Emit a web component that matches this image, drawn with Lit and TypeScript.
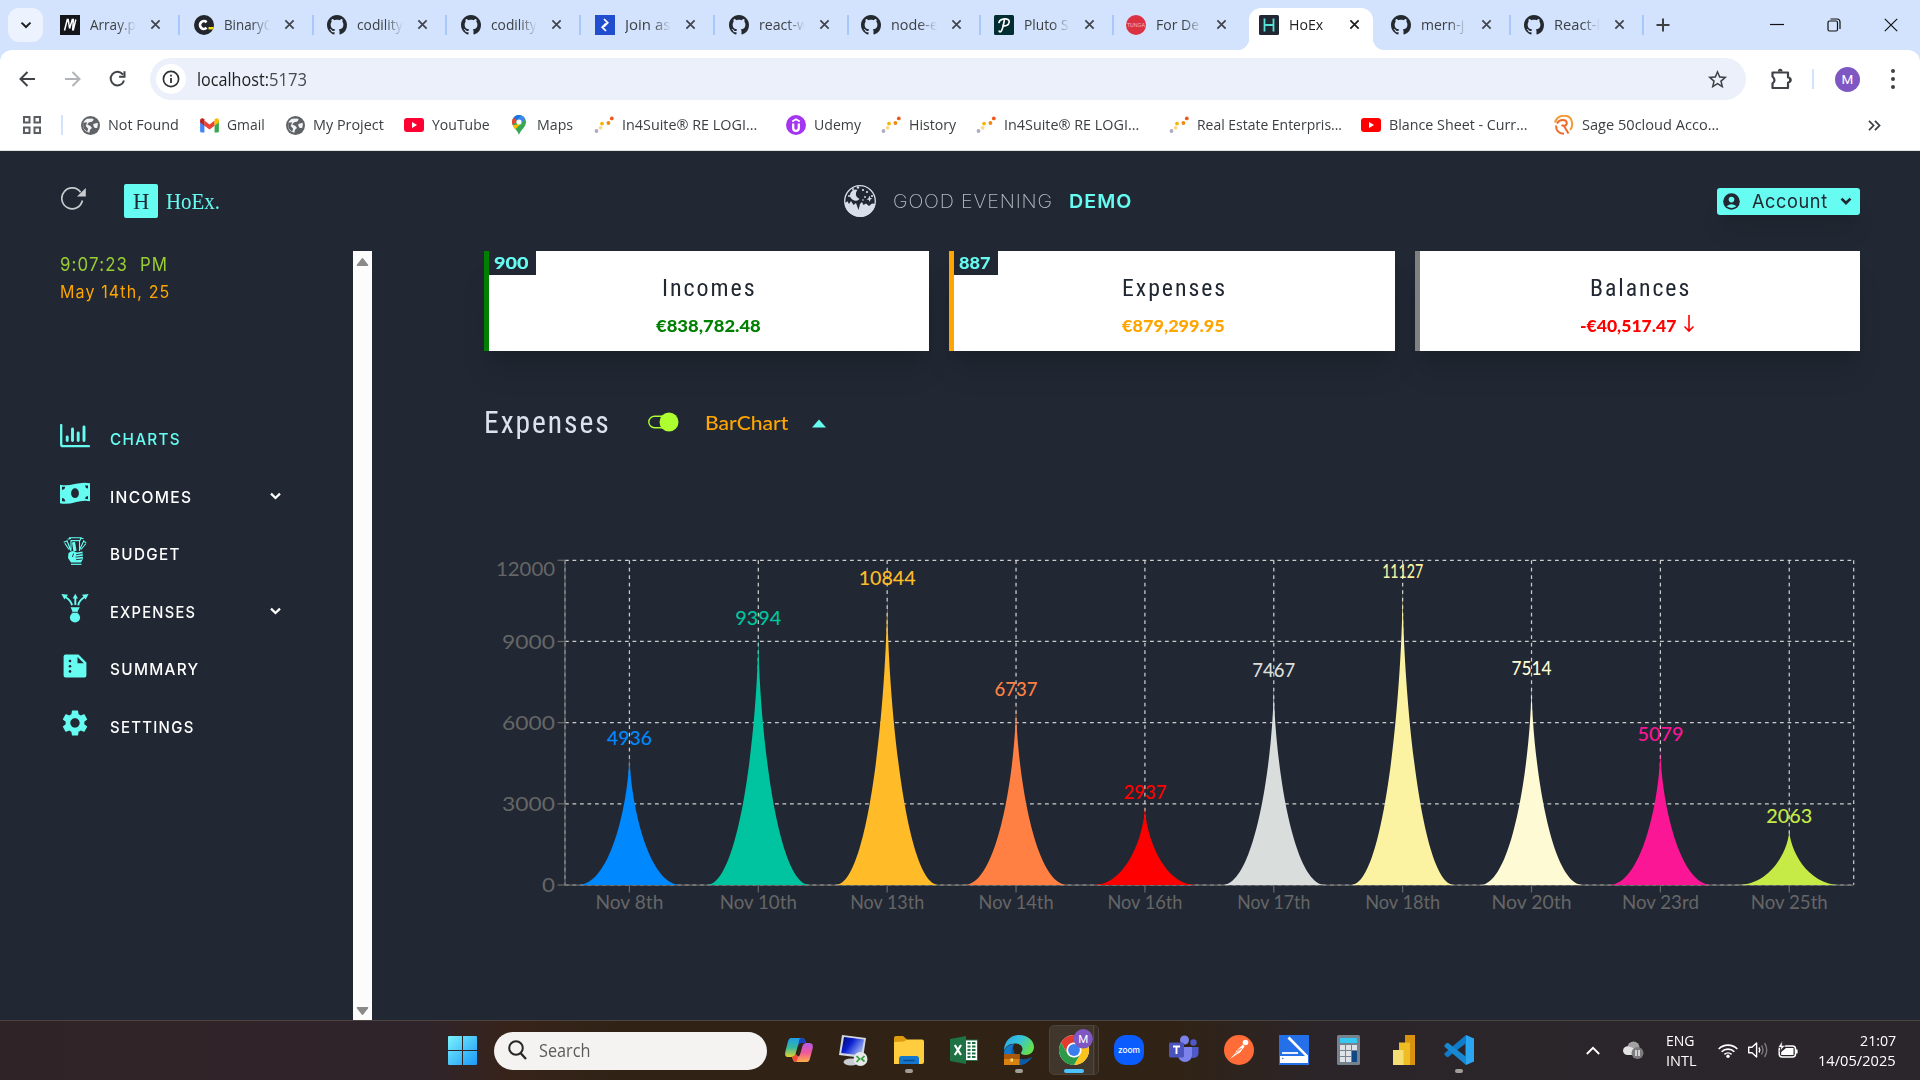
import { LitElement, html, svg, css, type TemplateResult } from "lit";
import { customElement, property } from "lit/decorators.js";
import { classMap } from "lit/directives/class-map.js";

type Art = TemplateResult | ReturnType<typeof svg>;

const icon = (box: string, w: number, h: number, art: Art) =>
  html`<svg viewBox=${box} width=${w} height=${h} style="display:block;flex:none">${art}</svg>`;

/** Text squeezed or stretched horizontally to a known measure. */
@customElement("fit-label")
class FitLabel extends LitElement {
  static styles = css`
    :host { display: inline-block; flex: none; white-space: pre; }
    .ink { display: inline-block; transform-origin: 0 50%; }
  `;
  @property() text = "";
  @property({ type: Number }) measure = 0;

  render() {
    return html`<span class="ink">${this.text}</span>`;
  }

  updated() {
    const ink = this.renderRoot.querySelector(".ink") as HTMLElement;
    const trailing = parseFloat(getComputedStyle(ink).letterSpacing) || 0;
    this.style.width = `${this.measure}px`;
    ink.style.transform = `scaleX(${this.measure / (ink.offsetWidth - trailing)})`;
  }
}

const label = (text: string, measure: number) =>
  html`<fit-label .text=${text} .measure=${measure}></fit-label>`;

/* ---------- artwork ---------- */

const github = icon("0 0 16 16", 20, 20, svg`<path fill="#24292f" d="M8 0C3.58 0 0 3.58 0 8c0 3.54 2.29 6.53 5.47 7.59.4.07.55-.17.55-.38 0-.19-.01-.82-.01-1.49-2.01.37-2.53-.49-2.69-.94-.09-.23-.48-.94-.82-1.13-.28-.15-.68-.52-.01-.53.63-.01 1.08.58 1.23.82.72 1.21 1.87.87 2.33.66.07-.52.28-.87.51-1.07-1.78-.2-3.64-.89-3.64-3.95 0-.87.31-1.59.82-2.15-.08-.2-.36-1.02.08-2.12 0 0 .67-.21 2.2.82.64-.18 1.32-.27 2-.27s1.36.09 2 .27c1.53-1.04 2.2-.82 2.2-.82.44 1.1.16 1.92.08 2.12.51.56.82 1.27.82 2.15 0 3.07-1.87 3.75-3.65 3.95.29.25.54.73.54 1.48 0 1.07-.01 1.93-.01 2.2 0 .21.15.46.55.38A8.01 8.01 0 0 0 16 8c0-4.42-3.58-8-8-8z"/>`);

const metaFav = icon("0 0 20 20", 20, 20, svg`<rect width="20" height="20" fill="#14151a"/><path d="M4.500 15.500 7.300 4.500H8.200L9.600 13.500 12.300 4.500H13.300L12.700 15.500M15.800 4.500 13.200 15.500" fill="none" stroke="#fff" stroke-width="1.500"/>`);
const codilityFav = icon("0 0 20 20", 20, 20, svg`<circle cx="10" cy="10" r="10" fill="#22252c"/><path d="M12.600 7.200A3.900 3.900 0 1 0 12.600 12.800" fill="none" stroke="#fff" stroke-width="2.600"/><rect x="14.500" y="12" width="5" height="2.400" fill="#f7e017"/>`);
const toptalFav = icon("0 0 20 20", 20, 20, svg`<rect width="20" height="20" fill="#204ecf"/><path d="M9 4 12.800 7.800 9 11.600M11 16 7.200 12.200 11 8.400" fill="none" stroke="#fff" stroke-width="1.700"/>`);
const plutoFav = icon("0 0 20 20", 20, 20, svg`<rect width="20" height="20" rx="1.500" fill="#022e32"/><path d="M5 7.500C6 3.500 15.600 2.200 15.200 7 14.900 10.600 10.400 11.800 9 10.200M10.300 5.400C9.600 9.500 8.600 15 6.800 16.600 6 17.200 5.200 16.800 5.200 16" fill="none" stroke="#fff" stroke-width="1.700" stroke-linecap="round"/>`);
const tungaFav = icon("0 0 20 20", 20, 20, svg`<circle cx="10" cy="10" r="10" fill="#dc3142"/><text x="10" y="12" font-size="5.200" text-anchor="middle" fill="#f5b9be" font-family="Liberation Sans">TUNGA</text>`);
const hoexFav = icon("0 0 20 20", 20, 20, svg`<rect width="20" height="20" rx="1.500" fill="#212833"/><path d="M5.500 3.500V16.500M14.500 3.500V16.500M5.500 10H14.500" stroke="#55e2d8" stroke-width="1.800"/>`);
const cross = icon("0 0 12 12", 11, 11, svg`<path d="M1.500 1.500 10.500 10.500M10.500 1.500 1.500 10.500" stroke="currentColor" stroke-width="1.900"/>`);

const globe = icon("2 2 20 20", 19, 19, svg`<circle cx="12" cy="12" r="10" fill="#5f6368"/><path fill="#fff" d="M4 12c0-3 1.600-5.800 4.200-7.200L14 4.600 15.500 6 13.500 8 10.500 8.500 8.500 11 12 12.500 13.500 14.500 11.500 16.500 10.800 19.500C7 19 4 16 4 12zM15 10.500 19.500 9Q20.300 12 19 14.500L16.500 14.500 15 12.500z" opacity=".92"/><path fill="#5f6368" d="M4.200 9 8.500 8.600 7 12.500 9.500 15.500 8.500 18.500 4.500 15z"/>`);
const gmail = icon("0 0 20 16", 19, 15, svg`<path d="M0 2.500V14a1.500 1.500 0 0 0 1.500 1.500H4.600V6.500z" fill="#4285f4"/><path d="M20 2.500V14a1.500 1.500 0 0 1-1.500 1.500H15.400V6.500z" fill="#34a853"/><path d="M4.600 2.600 10 6.800 15.400 2.600V8.200L10 12.300 4.600 8.200z" fill="#ea4335"/><path d="M0 2.600C0 .4 2.300-.5 4 .9L4.600 1.400V8.200L0 4.700z" fill="#c5221f"/><path d="M20 2.600C20 .4 17.700-.5 16 .9L15.400 1.400V8.200L20 4.700z" fill="#fbbc04"/>`);
const youtube = (c: string) => icon("0 0 20 14", 20, 14, svg`<rect width="20" height="14" rx="3" fill=${c}/><path d="M8 4 13 7 8 10z" fill="#fff"/>`);
const mapsPin = icon("0 0 14 20", 14, 20, svg`<path d="M7 20C6 15.600 0 12 0 7A7 7 0 0 1 14 7C14 12 8 15.600 7 20z" fill="#34a853"/><path d="M0 7A7 7 0 0 1 1.700 2.400L5 5.300.8 10.200C.3 9.200 0 8.200 0 7z" fill="#ea4335"/><path d="M1.700 2.400A7 7 0 0 1 9.300.4L5 5.300z" fill="#1a73e8"/><path d="M9.300.4A7 7 0 0 1 13.200 3.700L8.800 8.800 5 5.300z" fill="#4285f4"/><path d="M.8 10.200 8.800 8.800 3.200 14.400C2.200 13 1.300 11.800.8 10.200z" fill="#fbbc04"/><circle cx="7" cy="7" r="2.600" fill="#fff"/>`);
const dots = icon("0 0 20 20", 20, 20, svg`<circle cx="2.500" cy="16" r="1.900" fill="#a9adbd"/><circle cx="6.600" cy="12.800" r="1.900" fill="#fbd98a"/><circle cx="8" cy="8.600" r="1.900" fill="#f5b400"/><circle cx="14.400" cy="8" r="1.900" fill="#f08a10"/><circle cx="17.800" cy="3.400" r="1.900" fill="#ee5a1c"/>`);
const udemy = icon("0 0 20 20", 20, 20, svg`<circle cx="10" cy="10" r="10" fill="#a435f0"/><path d="M6.200 6.600 10 4.300 13.800 6.600" fill="none" stroke="#fff" stroke-width="1.700"/><path d="M7.200 8.500V13a2.800 2.800 0 0 0 5.600 0V8.500" fill="none" stroke="#fff" stroke-width="2.300"/>`);
const sage = icon("0 0 20 20", 20, 20, svg`<path d="M1 7.500C3.500-1 15-1.500 17.500 5.500 19 10 18 13 16 15" fill="none" stroke="#f29a38" stroke-width="2"/><path d="M3 8.500C5.500 4 12.500 4 12.800 8 13 11 9 11.200 7.500 10.200M10 11 14.500 18.500M2 10.500C2 15.500 5 18.500 10 18.800" fill="none" stroke="#ee6c2b" stroke-width="2"/>`);

const MINT = "#66fcf1";
const chartsIcon = icon("0 0 30 24", 30, 24, svg`<path d="M1.200 1V20.500Q1.200 22.200 3 22.200H29" fill="none" stroke=${MINT} stroke-width="2.300" stroke-linecap="round"/><path d="M7.200 13V16.500M12.500 5V16.500M18.200 9V16.500M24 3V16.500" stroke=${MINT} stroke-width="2.900" stroke-linecap="round"/>`);
const moneyIcon = icon("0 0 30 24", 30, 24, svg`<path d="M0 3.700C10 6.500 19 -.5 30 2.300V20.300C20 17.500 11 25 0 22.200z" fill=${MINT}/><ellipse cx="15" cy="12.200" rx="3.900" ry="4.900" fill="#212833"/><g fill="#212833"><path d="M2 5.800H5.200Q5 8.500 2 9z"/><path d="M28 4.400H25Q25.200 7 28 7.400z"/><path d="M2 17Q5 17.300 5.300 20.500L2 20.300z"/><path d="M28 15Q25.200 15.300 25 17.800L28 18.200z"/></g>`);
const budgetIcon = icon("0 0 24 28", 24, 28, svg`<g fill="none" stroke=${MINT} stroke-width="1.100"><path d="M6 .8H18L17 3.500M7.500 3.600H16.500V14M8 4V13M3.800 3.200 7.500 13M1.800 6.200 6 12.500M.7 5.300 3.800 4M4.600 2.200 8 1.500M16.500 13 21 3.200M18 12.500 23 6.500M20.500 1.800 17.500 1M23.300 5.600 20.500 4.500M5.200 6.500 8 14"/></g><path d="M9 5.500 12 4.800 13.500 13.500 10.500 15z" fill=${MINT}/><path d="M5.500 16 9 14 14 15.500 19.500 14.500 20 22 18 25.500H8L5 21z" fill=${MINT}/><path d="M13 17.800 19.500 16.600M12.500 20.200 20 19.200M13 22.700 19.500 22M10.500 16.500 9.500 20" stroke="#212833" stroke-width=".9"/><path d="M8 27.300H18.500" stroke=${MINT} stroke-width="1.200"/>`);
const expensesIcon = icon("0 0 28 30", 28, 30, svg`<g fill=${MINT}><path d="M.4 1 7 1.800 3.400 6.500z"/><path d="M27.600 1 21 1.800 24.600 6.500z"/><path d="M14.300.8 16.900 5.500H11.700z"/><path d="M9.600 14.300 18.800 14.300 16.600 18.200 17.800 20H10.200L11.400 18.200z"/><circle cx="14" cy="24.500" r="5.100"/></g><g fill="none" stroke=${MINT} stroke-width="1.900"><path d="M4.500 4Q10 7.500 11 12.300M23.500 4Q18 7.500 17.200 12.300M14.300 5V12"/></g><path d="M9.500 19.300H18.500" stroke="#212833" stroke-width=".9"/>`);
const summaryIcon = icon("0 0 24 24", 24, 24, svg`<path d="M2.600.6H15.500L23.400 8.500V21.400A2 2 0 0 1 21.400 23.400H2.600A2 2 0 0 1 .6 21.400V2.600A2 2 0 0 1 2.600.6z" fill=${MINT}/><path d="M14.500 3V9.300H20.800z" fill="#212833"/><circle cx="7" cy="7" r="1.300" fill="#212833"/><circle cx="7" cy="12.200" r="1.300" fill="#212833"/><circle cx="7" cy="17.400" r="1.300" fill="#212833"/>`);
const gearIcon = icon("2 2 20 20", 26, 26, svg`<path fill=${MINT} d="M19.140 12.940c.04-.3.06-.61.06-.94 0-.32-.02-.64-.07-.94l2.030-1.580c.18-.14.23-.41.12-.61l-1.920-3.320c-.12-.22-.37-.29-.59-.22l-2.390.96c-.5-.38-1.030-.7-1.620-.94l-.36-2.540c-.04-.24-.24-.41-.48-.41h-3.840c-.24 0-.43.17-.47.41l-.36 2.540c-.59.24-1.130.57-1.620.94l-2.390-.96c-.22-.08-.47 0-.59.22L2.740 8.870c-.12.21-.08.47.12.61l2.030 1.580c-.05.3-.09.63-.09.94s.02.64.07.94l-2.030 1.580c-.18.14-.23.41-.12.61l1.920 3.320c.12.22.37.29.59.22l2.390-.96c.5.38 1.030.7 1.620.94l.36 2.540c.05.24.24.41.48.41h3.840c.24 0 .44-.17.47-.41l.36-2.540c.59-.24 1.130-.56 1.620-.94l2.390.96c.22.08.47 0 .59-.22l1.920-3.320c.12-.22.07-.47-.12-.61l-2.010-1.580zM12 15.600c-1.980 0-3.600-1.620-3.600-3.600s1.620-3.600 3.600-3.600 3.600 1.620 3.600 3.600-1.620 3.600-3.600 3.600z"/>`);
const chevron = (w: number, h: number, sw = 2.4) => icon("0 0 12 8", w, h, svg`<path d="M1.500 1.600 6 6 10.500 1.600" fill="none" stroke="currentColor" stroke-width=${sw}/>`);

/* ---------- browser chrome ---------- */

interface Tab { fav: Art; title: string; text: number; slot: number; active?: boolean; bar?: boolean }
const tabs: Tab[] = [
  { fav: metaFav, title: "Array.p", text: 46, slot: 134, bar: true },
  { fav: codilityFav, title: "BinaryC", text: 48, slot: 133, bar: true },
  { fav: github, title: "codility", text: 46, slot: 134, bar: true },
  { fav: github, title: "codility", text: 46, slot: 134, bar: true },
  { fav: toptalFav, title: "Join as", text: 45, slot: 134, bar: true },
  { fav: github, title: "react-w", text: 49, slot: 132, bar: true },
  { fav: github, title: "node-e", text: 47, slot: 133, bar: true },
  { fav: plutoFav, title: "Pluto S", text: 45, slot: 132, bar: true },
  { fav: tungaFav, title: "For De", text: 43, slot: 133 },
  { fav: hoexFav, title: "HoEx", text: 34, slot: 132, active: true },
  { fav: github, title: "mern-j", text: 43, slot: 133, bar: true },
  { fav: github, title: "React-l", text: 46, slot: 132, bar: true },
];

const bookmarks: [Art, string, number, number][] = [
  [globe, "Not Found", 71, 119],
  [gmail, "Gmail", 38, 86],
  [globe, "My Project", 71, 119],
  [youtube("#ff0033"), "YouTube", 58, 105],
  [mapsPin, "Maps", 36, 85],
  [dots, "In4Suite® RE LOGI...", 135, 192],
  [udemy, "Udemy", 47, 95],
  [dots, "History", 47, 95],
  [dots, "In4Suite® RE LOGI...", 135, 193],
  [dots, "Real Estate Enterpris...", 145, 192],
  [youtube("#ff0000"), "Blance Sheet - Curr...", 138, 193],
  [sage, "Sage 50cloud Acco...", 137, 200],
];

@customElement("browser-chrome")
class BrowserChrome extends LitElement {
  static styles = css`
    :host { display: block; height: 151px; background: #d3e3fd; font: 15px/20px "Open Sans", sans-serif; color: #3c4043; }
    .strip { display: flex; height: 50px; align-items: stretch; }
    .picker { width: 35px; height: 34px; margin: 8px 9px 0 8px; border-radius: 11px; background: #ecf2fe; display: flex; align-items: center; justify-content: center; color: #1f1f1f; }
    .tab { display: flex; align-items: center; padding: 0 0 1px 8px; box-sizing: border-box; flex: none; position: relative; }
    .title { width: 47px; margin-left: 10px; white-space: nowrap; mask-image: linear-gradient(90deg, #000 60%, transparent 98%); display: flex; padding-bottom: 1px; }
    .title fit-label { max-width: 47px; }
    .tab .x { margin-left: 13px; color: #41444a; }
    .tab .bar { width: 2px; height: 20px; background: #a8c7fa; margin-left: 17px; }
    .active { color: #1f1f1f; }
    .active::before { content: ""; position: absolute; left: -2px; top: 8px; width: 124px; height: 42px; background: #fff; border-radius: 12px 12px 0 0; }
    .active::after { content: ""; position: absolute; left: -14px; bottom: 0; width: 148px; height: 12px; background: radial-gradient(circle at 0 0, transparent 12px, #fff 12.500px) 0 0 / 12px 12px no-repeat, radial-gradient(circle at 12px 0, transparent 12px, #fff 12.500px) 136px 0 / 12px 12px no-repeat; }
    .active > * { z-index: 1; }
    .active .title { mask-image: none; }
    .active .x { color: #1f1f1f; }
    .new { display: flex; align-items: center; margin-left: 8px; }
    .controls { display: flex; align-items: center; margin-left: auto; gap: 43px; padding-right: 22px; }
    .tools { height: 58px; background: #fff; border-radius: 12px 12px 0 0; display: flex; align-items: center; padding: 0 20px 0 18px; box-sizing: border-box; }
    .tools > svg + svg { margin-left: 25px; }
    .omni { width: 1596px; height: 42px; border-radius: 21px; background: #ebf0fa; margin-left: 22px; display: flex; align-items: center; box-sizing: border-box; padding: 0 17px 0 6px; flex: none; }
    .info { width: 30px; height: 30px; border-radius: 50%; background: #fff; display: flex; align-items: center; justify-content: center; margin-right: 11px; }
    .url { font-size: 17.500px; line-height: 22px; display: flex; color: #1f1f1f; margin-right: auto; }
    .port { color: #474b50; }
    .ext { margin-left: 24px; }
    .sep { width: 2px; height: 20px; background: #d3e3fd; }
    .tools .sep { margin: 0 21px 0 20px; }
    .me { width: 25px; height: 25px; border-radius: 50%; background: #7e57c2; color: #fff; font: 13.500px/25px Roboto, sans-serif; text-align: center; margin-right: 30px; }
    .marks { height: 43px; background: #fff; border-bottom: 1px solid #dfe3e2; box-sizing: border-box; display: flex; align-items: flex-start; }
    .marks .row { height: 34px; display: flex; align-items: center; width: 100%; padding-left: 22px; }
    .mark { display: flex; align-items: center; flex: none; gap: 8px; }
    .mark fit-label { margin-bottom: 2px; }
    .mark .pic { width: 20px; display: flex; justify-content: center; }
    .row .sep { margin: 0 17px 0 19px; }
    .more { margin-left: auto; margin-right: 39px; }
  `;

  private tab(t: Tab) {
    return html`<div class=${classMap({ tab: true, active: !!t.active })} style="width:${t.slot}px">
      ${t.fav}
      <div class="title">${label(t.title, t.text)}</div>
      <div class="x">${cross}</div>
      ${t.bar ? html`<div class="bar"></div>` : ""}
    </div>`;
  }

  render() {
    return html`
      <div class="strip">
        <div class="picker">${chevron(12, 8, 2)}</div>
        ${tabs.map((t) => this.tab(t))}
        <div class="new">${icon("0 0 14 14", 14, 14, svg`<path d="M7 .5V13.500M.5 7H13.500" stroke="#3c4043" stroke-width="2"/>`)}</div>
        <div class="controls">
          ${icon("0 0 14 14", 14, 14, svg`<path d="M0 6.500H14" stroke="#111" stroke-width="1.200"/>`)}
          ${icon("0 0 14 14", 14, 14, svg`<path d="M1 4.500A1.500 1.500 0 0 1 2.500 3H9A1.500 1.500 0 0 1 10.500 4.500V11.500A1.500 1.500 0 0 1 9 13H2.500A1.500 1.500 0 0 1 1 11.500zM3.500 1H10A3 3 0 0 1 13 4V11" fill="none" stroke="#111" stroke-width="1.200"/>`)}
          ${icon("0 0 14 14", 14, 14, svg`<path d="M.8.8 13.200 13.200M13.200.8.8 13.200" stroke="#111" stroke-width="1.200"/>`)}
        </div>
      </div>
      <div class="tools">
        ${icon("0 0 20 20", 20, 20, svg`<path d="M17 10H3.500M9.500 3 2.500 10 9.500 17" fill="none" stroke="#3f4246" stroke-width="2"/>`)}
        ${icon("0 0 20 20", 20, 20, svg`<path d="M2 10H16M9.500 3 16.500 10 9.500 17" fill="none" stroke="#b1b3b6" stroke-width="2"/>`)}
        ${icon("0 0 20 20", 20, 20, svg`<path d="M16 11.500A6.800 6.800 0 1 1 15 5.600M16.500 2.300V7.700H11.100" fill="none" stroke="#3f4246" stroke-width="2"/>`)}
        <div class="omni">
          <div class="info">${icon("0 0 18 18", 18, 18, svg`<circle cx="9" cy="9" r="7.600" fill="none" stroke="#303134" stroke-width="1.700"/><path d="M9 8V13M9 4.800V6.600" stroke="#303134" stroke-width="1.800"/>`)}</div>
          <div class="url">${label("localhost:", 72)}<span class="port">${label("5173", 38)}</span></div>
          ${icon("0 0 24 24", 23, 23, svg`<path fill="#3f4246" d="M22 9.240l-7.190-.62L12 2 9.190 8.630 2 9.240l5.460 4.730L5.820 21 12 17.270 18.180 21l-1.630-7.030L22 9.240zM12 15.400l-3.760 2.270 1-4.280-3.320-2.880 4.380-.38L12 6.100l1.710 4.040 4.380.38-3.320 2.880 1 4.280L12 15.400z"/>`)}
        </div>
        <div class="ext">${icon("0 0 22 24", 22, 24, svg`<path d="M2.500 5.500H18V10.500A2 2 0 0 1 18 15.500V21H2.500V16.500Q6.500 13.500 2.500 9.500z" fill="none" stroke="#3f4246" stroke-width="2.200" stroke-linejoin="round"/><path d="M7.800 4.500A2.400 2.700 0 0 1 12.600 4.500zM19 10.300A2.500 2.600 0 0 1 19 15.500z" fill="#3f4246"/>`)}</div>
        <div class="sep"></div>
        <div class="me">M</div>
        ${icon("0 0 6 22", 6, 22, svg`<circle cx="3" cy="3" r="2" fill="#3f4246"/><circle cx="3" cy="11" r="2" fill="#3f4246"/><circle cx="3" cy="19" r="2" fill="#3f4246"/>`)}
      </div>
      <div class="marks"><div class="row">
        ${icon("0 0 20 20", 20, 20, svg`<path d="M2 2H7.500V7.500H2zM12.500 2H18V7.500H12.500zM2 12.500H7.500V18H2zM12.500 12.500H18V18H12.500z" fill="none" stroke="#5a5e63" stroke-width="2"/>`)}
        <div class="sep"></div>
        ${bookmarks.map(([pic, name, w, slot]) => html`<div class="mark" style="width:${slot}px"><div class="pic">${pic}</div>${label(name, w)}</div>`)}
        <div class="more">${icon("0 0 14 12", 13, 11, svg`<path d="M1 1 6 6 1 11M7.500 1 12.500 6 7.500 11" fill="none" stroke="#3c4043" stroke-width="1.900"/>`)}</div>
      </div></div>`;
  }
}

/* ---------- dashboard ---------- */

interface Point { day: string; value: number; fill: string; dayW: number; valW: number }
const points: Point[] = [
  { day: "Nov 8th", value: 4936, fill: "#0088fe", dayW: 68, valW: 45 },
  { day: "Nov 10th", value: 9394, fill: "#00c49f", dayW: 77, valW: 46 },
  { day: "Nov 13th", value: 10844, fill: "#ffbb28", dayW: 74, valW: 57 },
  { day: "Nov 14th", value: 6737, fill: "#ff8042", dayW: 75, valW: 43 },
  { day: "Nov 16th", value: 2937, fill: "#ff0000", dayW: 75, valW: 43 },
  { day: "Nov 17th", value: 7467, fill: "#d9dddc", dayW: 73, valW: 43 },
  { day: "Nov 18th", value: 11127, fill: "#fcf3a2", dayW: 75, valW: 41 },
  { day: "Nov 20th", value: 7514, fill: "#fefbd4", dayW: 80, valW: 40 },
  { day: "Nov 23rd", value: 5079, fill: "#fb1695", dayW: 77, valW: 46 },
  { day: "Nov 25th", value: 2063, fill: "#c6ea46", dayW: 77, valW: 46 },
];

@customElement("spike-chart")
class SpikeChart extends LitElement {
  static styles = css`
    :host { display: block; }
    svg { display: block; }
    text { font: 20px Lato, sans-serif; }
    .grid { stroke: #ccc; stroke-width: 1.250; stroke-dasharray: 3.750 3.750; }
    .axis { stroke: #666; stroke-width: 1.250; }
    .tick { fill: #666; }
    .value { font-weight: 500; }
  `;

  render() {
    const left = 81, top = 20.3, w = 1288.700, h = 324.700;
    const band = w / points.length;
    const base = top + h;
    const y = (v: number) => base - (v / 12000) * h;
    const levels: [number, number, number][] = [[0, 13, 891.500], [3000, 53, 811], [6000, 53, 730], [9000, 53, 648.500], [12000, 59, 576]];
    const bar = (p: Point, i: number) => {
      const bw = band * 0.8, x = left + band * (i + 0.1), t = y(p.value), bh = base - t;
      return `M${x},${base}C${x + bw / 3},${base} ${x + bw / 2},${t + bh / 3} ${x + bw / 2},${t}C${x + bw / 2},${t + bh / 3} ${x + (2 * bw) / 3},${base} ${x + bw},${base}Z`;
    };
    const mid = (i: number) => left + band * (i + 0.5);
    return html`<svg width="1376" height="380">
      ${levels.map(([v]) => svg`<line class="grid" x1=${left} x2=${left + w} y1=${y(v)} y2=${y(v)}/>`)}
      ${points.map((_, i) => svg`<line class="grid" x1=${mid(i)} x2=${mid(i)} y1=${top} y2=${base}/>`)}
      <line class="grid" x1=${left} x2=${left} y1=${top} y2=${base}></line>
      <line class="grid" x1=${left + w} x2=${left + w} y1=${top} y2=${base}></line>
      <path class="axis" fill="none" d="M${left} ${top}V${base}H${left + w}"></path>
      ${levels.map(([v, tw, by]) => svg`<line class="axis" x1=${left - 7.5} x2=${left} y1=${y(v)} y2=${y(v)}/><text class="tick" x=${71 - tw} y=${by - 540} textLength=${tw} lengthAdjust="spacingAndGlyphs">${v}</text>`)}
      ${points.map((p, i) => svg`<line class="axis" x1=${mid(i)} x2=${mid(i)} y1=${base} y2=${base + 7.5}/><text class="tick" x=${mid(i) - p.dayW / 2} y="369" textLength=${p.dayW} lengthAdjust="spacingAndGlyphs">${p.day}</text>`)}
      ${points.map((p, i) => svg`<path fill=${p.fill} d=${bar(p, i)}/>`)}
      ${points.map((p, i) => svg`<text class="value" fill=${p.fill} x=${mid(i) - p.valW / 2} y=${y(p.value) - 6.3} textLength=${p.valW} lengthAdjust="spacingAndGlyphs">${p.value}</text>`)}
    </svg>`;
  }
}

const menu: { pic: Art; name: string; w: number; open?: boolean; on?: boolean }[] = [
  { pic: chartsIcon, name: "CHARTS", w: 70, on: true },
  { pic: moneyIcon, name: "INCOMES", w: 81, open: true },
  { pic: budgetIcon, name: "BUDGET", w: 69 },
  { pic: expensesIcon, name: "EXPENSES", w: 85, open: true },
  { pic: summaryIcon, name: "SUMMARY", w: 88 },
  { pic: gearIcon, name: "SETTINGS", w: 83 },
];

const cards = [
  { tone: "green", count: "900", countW: 35, title: "Incomes", titleW: 93, sum: "€838,782.48", sumW: 105 },
  { tone: "orange", count: "887", countW: 32, title: "Expenses", titleW: 103, sum: "€879,299.95", sumW: 103 },
  { tone: "gray", count: "", countW: 0, title: "Balances", titleW: 99, sum: "-€40,517.47", sumW: 96 },
];

@customElement("hoex-dashboard")
class HoexDashboard extends LitElement {
  static styles = css`
    :host { display: block; height: 869px; background: #212833; font-family: Inter, sans-serif; overflow: hidden; }
    .head { height: 100px; display: flex; align-items: center; padding: 0 60px 0 61px; box-sizing: border-box; }
    .reload { margin-bottom: 5px; }
    .logo { width: 34px; height: 34px; border-radius: 2px; background: #66fcf1; margin-left: 37px; display: flex; align-items: center; justify-content: center; color: #212833; font: 24px/34px "Liberation Serif", serif; }
    .brand { color: #66fcf1; font: 24px/30px "Liberation Serif", serif; margin-left: 8px; }
    .greet { display: flex; align-items: center; margin-left: 623px; }
    .hello { margin-left: 16px; color: #b9bdc4; font-size: 19px; font-weight: 200; letter-spacing: .8px; }
    .who { margin-left: 17px; color: #66fcf1; font-size: 19px; font-weight: 600; letter-spacing: 1px; }
    .account { margin-left: auto; width: 143px; height: 27px; border-radius: 3px; background: #66fcf1; color: #212833; display: flex; align-items: center; font-size: 18.500px; line-height: 27px; letter-spacing: .6px; padding: 0 8px 0 6px; box-sizing: border-box; box-shadow: 0 20px 25px -5px rgba(0,0,0,.1), 0 8px 10px -6px rgba(0,0,0,.1); }
    .account fit-label { margin: 0 auto 0 12px; padding-top: 1px; }
    .body { display: flex; height: 769px; }
    .side { width: 353px; box-sizing: border-box; padding-left: 60px; flex: none; }
    .time { color: #9acd32; font-size: 19px; line-height: 26px; letter-spacing: 1.300px; }
    .date { color: orange; font-size: 17px; line-height: 26px; letter-spacing: 1.200px; padding-top: 1px; }
    .stamp { display: flex; flex-direction: column; height: 159px; padding-top: 1px; box-sizing: border-box; }
    .item { height: 57.500px; display: flex; align-items: center; color: #fff; font-size: 16.500px; font-weight: 500; letter-spacing: 1.400px; width: 222px; }
    .item fit-label { padding-top: 1px; }
    .item .pic { width: 30px; display: flex; justify-content: center; margin: 0 20px 6px 0; }
    .item .arrow { margin-left: auto; }
    .on { color: #66fcf1; }
    .scroll { width: 19px; background: #fcfcfc; display: flex; flex-direction: column; justify-content: space-between; align-items: center; padding: 6px 0 4px; box-sizing: border-box; }
    .main { flex: 1; padding: 0 60px 0 112px; min-width: 0; }
    .cards { display: grid; grid-template-columns: repeat(3, 1fr); gap: 20px; }
    .card { height: 100px; background: #fff; border-left: 5px solid; box-sizing: border-box; position: relative; display: flex; flex-direction: column; align-items: center; box-shadow: 0 25px 31px -6px rgba(0,0,0,.12), 0 10px 12px -7px rgba(0,0,0,.12); }
    .green { border-color: green; }
    .orange { border-color: orange; }
    .gray { border-color: gray; }
    .badge { position: absolute; left: 0; top: 0; height: 24px; background: #212833; color: #66fcf1; font: 900 17px/24px Lato, sans-serif; padding: 0 7px 0 5px; }
    .name { font: 24.500px/30px "Liberation Sans Narrow", "Roboto Condensed", Roboto, sans-serif; letter-spacing: 2px; color: #212833; margin-top: 22px; padding-right: 1px; }
    .sum { font: 900 17px/22px Lato, sans-serif; display: flex; margin-top: 12px; gap: 7px; padding-right: 2px; }
    .green .sum { color: green; }
    .orange .sum { color: orange; }
    .gray .sum { color: red; padding-right: 4px; }
    .bar { display: flex; align-items: center; height: 44px; margin-top: 49px; }
    .h2 { font: 30.500px/40px "Liberation Sans Narrow", "Roboto Condensed", Roboto, sans-serif; letter-spacing: 2px; color: #dde3ec; padding-top: 2px; }
    .toggle { margin-left: 39px; }
    .kind { font: 500 20px/28px Lato, sans-serif; color: orange; margin-left: 26px; }
    .up { margin: 2px 0 0 24px; }
    spike-chart { margin-top: 96px; }
  `;

  render() {
    return html`
      <div class="head">
        <div class="reload">${icon("0 0 26 26", 26, 26, svg`<path d="M21.400 14.500A10.400 10.400 0 1 1 19.600 6.200" fill="none" stroke="#c9cbce" stroke-width="1.700"/><path d="M24.800 2V10.500H16z" fill="#c9cbce"/>`)}</div>
        <div class="logo">${label("H", 16)}</div>
        <div class="brand">${label("HoEx.", 54)}</div>
        <div class="greet">
          ${icon("0 0 34 34", 34, 34, svg`<circle cx="17" cy="17" r="15.300" fill="none" stroke="#d8dfea" stroke-width="1.300"/><path d="M2 19 4.500 17.200 6 20 8 17 10.500 21 13 19 15.500 26 17 20 19 18 20.500 21 23 19.500 26 22 29 19.500 32.400 20A15.500 15.500 0 0 1 2 21z" fill="#d8dfea"/><path d="M14.500 6A5.500 5.500 0 1 0 16.500 15 5.300 5.300 0 0 1 14.500 6z" fill="#d8dfea"/><g fill="#d8dfea"><circle cx="20" cy="6" r="1.100"/><circle cx="24" cy="8" r="1.100"/><circle cx="15" cy="3.500" r="1.200"/><circle cx="22" cy="13" r=".9"/><circle cx="29" cy="12" r="1.100"/><circle cx="6" cy="12" r="1"/><circle cx="10" cy="5" r="1"/><circle cx="20" cy="16" r=".8"/><path d="M26.500 11.500 27.300 14 29.500 14.600 27.400 15.600 26.800 18 25.700 15.800 23.500 15.400 25.500 14.200z"/></g>`)}
          <div class="hello">${label("GOOD EVENING", 159)}</div>
          <div class="who">${label("DEMO", 62)}</div>
        </div>
        <div class="account">
          ${icon("0 0 17 17", 17, 17, svg`<circle cx="8.500" cy="8.500" r="8.300" fill="#212833"/><circle cx="8.500" cy="6.600" r="2.800" fill="#66fcf1"/><path d="M3.600 13.200Q8.500 9.200 13.400 13.200Q8.500 16.600 3.600 13.200z" fill="#66fcf1"/>`)}
          ${label("Account", 75)}
          ${chevron(12, 8, 2.7)}
        </div>
      </div>
      <div class="body">
        <div class="side">
          <div class="stamp">
            <div class="time">${label("9:07:23  PM", 107)}</div>
            <div class="date">${label("May 14th, 25", 109)}</div>
          </div>
          ${menu.map((m) => html`<div class=${classMap({ item: true, on: !!m.on })}>
            <div class="pic">${m.pic}</div>${label(m.name, m.w)}
            ${m.open ? html`<div class="arrow">${chevron(13, 8, 2.3)}</div>` : ""}
          </div>`)}
        </div>
        <div class="scroll">
          ${icon("0 0 14 10", 13, 10, svg`<path d="M7 1.500 12.500 8.500H1.500z" fill="#8a8a8a" stroke="#8a8a8a" stroke-width="1.500" stroke-linejoin="round"/>`)}
          ${icon("0 0 14 10", 13, 10, svg`<path d="M7 8.500 12.500 1.500H1.500z" fill="#8a8a8a" stroke="#8a8a8a" stroke-width="1.500" stroke-linejoin="round"/>`)}
        </div>
        <div class="main">
          <div class="cards">
            ${cards.map((c) => html`<div class="card ${c.tone}">
              ${c.count ? html`<div class="badge">${label(c.count, c.countW)}</div>` : ""}
              <div class="name">${label(c.title, c.titleW)}</div>
              <div class="sum">${label(c.sum, c.sumW)}${c.tone === "gray" ? icon("0 0 12 18", 12, 18, svg`<path d="M6 0V16M1.500 11.500 6 16 10.500 11.500" fill="none" stroke="red" stroke-width="1.600"/>`) : ""}</div>
            </div>`)}
          </div>
          <div class="bar">
            <div class="h2">${label("Expenses", 125)}</div>
            <div class="toggle">${icon("0 0 31 20", 31, 20, svg`<rect x=".8" y="4.300" width="22" height="11.400" rx="5.700" fill="none" stroke="#adff2f" stroke-width="1.400"/><circle cx="21" cy="10" r="9.500" fill="#adff2f"/>`)}</div>
            <div class="kind">${label("BarChart", 83)}</div>
            <div class="up">${icon("0 0 14 9", 14, 9, svg`<path d="M7 .5 14 8.500H0z" fill="#66fcf1"/>`)}</div>
          </div>
          <spike-chart></spike-chart>
        </div>
      </div>`;
  }
}

/* ---------- taskbar ---------- */

const apps: { art: Art; mark?: "dot" | "live" }[] = [
  { art: icon("0 0 30 30", 30, 30, svg`<defs><linearGradient id="cpa" x1="0" y1="0" x2="0" y2="1"><stop offset="0" stop-color="#1e9de8"/><stop offset=".5" stop-color="#35b9a0"/><stop offset="1" stop-color="#e4d02c"/></linearGradient><linearGradient id="cpb" x1="0" y1="0" x2="0" y2="1"><stop offset="0" stop-color="#b45ae8"/><stop offset=".5" stop-color="#f0579c"/><stop offset="1" stop-color="#fbae48"/></linearGradient></defs><path d="M7 3H18Q20.500 3 21.500 6.500L22 8H17Q14.500 8 13.500 12L11.500 19Q10.500 22 7.500 22H4Q0 22 1.500 16L4 6.500Q5 3 7 3z" fill="url(#cpa)"/><path d="M17 3Q20.500 3 21.500 6.500L22 8H17Q15 8 14 10.500L15.500 4z" fill="#173fc2"/><path d="M23 27H12Q9.500 27 8.500 23.500L8 22Q10.500 22 11.500 19L14 21.500Q15.500 21.500 16.500 18L18.500 11Q19.500 8 22.500 8H25.500Q30 8 28.500 14L26 23.500Q25 27 23 27z" fill="url(#cpb)"/><path d="M8 22Q10.500 22 11.500 19L14 21.500 12.500 27Q9.500 27 8 22z" fill="#ee4a34"/>`) },
  { art: icon("0 0 30 32", 30, 32, svg`<defs><linearGradient id="rdp" x1="0" y1="0" x2="1" y2=".6"><stop offset="0" stop-color="#020a5c"/><stop offset=".45" stop-color="#0a1fd0"/><stop offset="1" stop-color="#9db6f5"/></linearGradient></defs><path d="M3 1 27 4 24 24 0 21z" fill="#d4d8e0"/><path d="M5 3 25 5.500 22.300 21.500 2.200 19z" fill="url(#rdp)"/><ellipse cx="12" cy="28" rx="7.500" ry="3.500" fill="#c9ccd2"/><circle cx="21.500" cy="25" r="7" fill="#e6e8ea"/><path d="M17.500 22 20.500 25 17.500 28M25.500 22 22.500 25 25.500 27.500" stroke="#35a13c" stroke-width="1.700" fill="none"/>`) },
  { art: icon("0 0 30 28", 30, 28, svg`<path d="M0 2Q0 0 2 0H9L13 3.500V8H0z" fill="#dc9b10"/><path d="M0 6 10 5.500 13 3.500H28Q30 3.500 30 5.500V26Q30 28 28 28H0z" fill="#ffcd3e"/><path d="M5 28V22.500Q5 20 7.500 20H22.500Q25 20 25 22.500V28z" fill="#1377ce"/><path d="M9.500 24.500H20.500" stroke="#0a4a8c" stroke-width="1.500"/>`), mark: "dot" },
  { art: icon("0 0 28 28", 28, 28, svg`<rect x="13" y="4" width="14.500" height="20.500" fill="#fff" stroke="#1f7244" stroke-width="1"/><path d="M17.500 7H20.500M17.500 10.500H20.500M17.500 14H20.500M17.500 17.500H20.500M17.500 21H20.500M22 7H25.500M22 10.500H25.500M22 14H25.500M22 17.500H25.500M22 21H25.500" stroke="#1f7244" stroke-width="2"/><path d="M0 3 16 0V28L0 25z" fill="#1f7244"/><path d="M4.800 9 11 19M11 9 4.800 19" stroke="#fff" stroke-width="2.200"/>`) },
  { art: icon("0 0 30 30", 30, 30, svg`<defs><linearGradient id="edg" x1="0" y1="0" x2="1" y2=".5"><stop offset="0" stop-color="#2aa6e4"/><stop offset=".5" stop-color="#35c1e0"/><stop offset="1" stop-color="#63e04f"/></linearGradient></defs><path d="M0 16C0 6 7 0 15 0 24 0 30 6 30 12 30 17 26 20 21.500 20 18.500 20 17 19 17 18 17 17 18.500 16.500 18.500 14 18.500 11 15.500 8.500 11 8.500 5 8.500 1 12 0 16z" fill="url(#edg)"/><path d="M0 17C1 12 5 9.500 10 9 8 12 9 18 13 22 16 25 22 26 28 22 25 27 20 30 15 30 6 30 0 24 0 17z" fill="#1477c9"/><path d="M10 9C8 12 9 18 13 22 16 25 22 25.500 28 22 24 28 18 30.500 15 29 8 26 5 15 10 9z" fill="#0c59a4"/><rect y="19" width="15.500" height="11" fill="#d9820f"/><rect y="19" width="15.500" height="5" fill="#a9580c"/><rect x="6.500" y="23.500" width="2.500" height="3" fill="#ffe07a"/>`), mark: "dot" },
  { art: icon("0 0 38 36", 38, 36, svg`<circle cx="19" cy="21" r="15" fill="#fff"/><path d="M6 13.500A15 15 0 0 1 32 13.500H19A7.500 7.500 0 0 0 12.500 24.700z" fill="#e33b2e"/><path d="M32 13.500A15 15 0 0 1 19 36L25.500 24.700A7.500 7.500 0 0 0 19 13.500z" fill="#fcc31e"/><path d="M6 13.500A15 15 0 0 0 19 36L25.500 24.700A7.500 7.500 0 0 1 12.500 24.700z" fill="#2c9a49"/><circle cx="19" cy="21" r="7.300" fill="#fff"/><circle cx="19" cy="21" r="5.900" fill="#3b7ded"/><circle cx="28.200" cy="9.800" r="9.700" fill="#7e57c2"/><text x="28.200" y="14" font-size="11.500" text-anchor="middle" fill="#fff" font-family="Roboto">M</text>`), mark: "live" },
  { art: icon("0 0 30 30", 30, 30, svg`<rect width="30" height="30" rx="12" fill="#0b5cff"/><text x="15" y="17.600" font-size="9" text-anchor="middle" fill="#fff" font-weight="500" font-family="Inter" textLength="22" lengthAdjust="spacingAndGlyphs">zoom</text>`) },
  { art: icon("0 0 30 30", 30, 30, svg`<circle cx="24.500" cy="7.500" r="3.200" fill="#5059c9"/><circle cx="15.500" cy="5" r="4.500" fill="#7b83eb"/><path d="M20 12H29.500V19A5 5 0 0 1 20 20z" fill="#5059c9"/><path d="M9 12H23V20A7 7 0 0 1 9 20z" fill="#7b83eb"/><rect y="7.500" width="15" height="15" rx="1.500" fill="#4b53bc"/><path d="M4 11.500H11M7.500 11.500V19" stroke="#fff" stroke-width="1.900"/>`) },
  { art: icon("0 0 30 30", 30, 30, svg`<circle cx="15" cy="15" r="15" fill="#ff6c37"/><circle cx="21.500" cy="7.500" r="2.800" fill="#fff"/><path d="M19 9.500 13 15 11 18.500 6 24 12.500 19.500 16 17.500 20.500 11.500z" fill="#fff"/><path d="M13 15.500 16.500 13.800M11.500 18.500 18 13" stroke="#ff6c37" stroke-width=".8"/>`) },
  { art: icon("0 0 30 30", 30, 30, svg`<rect width="30" height="30" fill="#2470e8"/><path d="M0 21H26L8.500 3.500 10.500 1.500 29 20.500V28H1V21z" fill="#fff"/><path d="M3 18H19" stroke="#fff" stroke-width="1.800"/><circle cx="3.800" cy="23.500" r=".8" fill="#2470e8"/>`) },
  { art: icon("0 0 23 30", 23, 30, svg`<rect width="23" height="30" rx="1.500" fill="#76828e"/><rect x="3" y="3" width="17" height="5" fill="#35c9f2"/><g fill="#dfe3e8"><rect x="3" y="10" width="5" height="5"/><rect x="9" y="10" width="5" height="5"/><rect x="15" y="10" width="5" height="5"/><rect x="3" y="16" width="5" height="5"/><rect x="9" y="16" width="5" height="5"/><rect x="3" y="22" width="5" height="5"/><rect x="9" y="22" width="5" height="5"/></g><rect x="15" y="16" width="5" height="11" fill="#0f4a86"/>`) },
  { art: icon("0 0 22 30", 22, 30, svg`<rect x="12" width="10" height="30" fill="#d9920f"/><rect x="6" y="7.500" width="11" height="22.500" fill="#eebd23"/><rect y="15" width="10.500" height="15" fill="#f5de74"/>`) },
  { art: icon("0 0 30 30", 30, 30, svg`<path d="M22 0 30 3.500V26.500L22 30 21.500 22V8z" fill="#2aa5f2"/><path d="M22 0V8.200L4.500 21.800Q3.500 22.500 2.600 21.700L.8 20Q-.2 19 .8 18z" fill="#0f7cc9"/><path d="M22 30V21.800L4.500 8.200Q3.500 7.500 2.600 8.300L.8 10Q-.2 11 .8 12z" fill="#1888d3"/>`), mark: "dot" },
];

@customElement("task-bar")
class TaskBar extends LitElement {
  static styles = css`
    :host { display: flex; height: 60px; box-sizing: border-box; border-top: 1px solid #4b4541; background: linear-gradient(90deg, #2f2327 0, #30242b 430px, #37231a 510px, #302316 620px, #302316 1180px, #2b2529 1320px, #2a262b 1920px); align-items: center; font-family: "Open Sans", sans-serif; color: #fff; }
    .start { margin-left: 448px; }
    .search { width: 273px; height: 38px; border-radius: 19px; background: #f4f3f1; margin: 0 4px 0 17px; display: flex; align-items: center; padding: 0 0 1px 14px; box-sizing: border-box; color: #5c5b5a; font-size: 17.500px; gap: 12px; }
    .app { width: 55px; height: 59px; display: flex; align-items: center; justify-content: center; position: relative; flex: none; margin-bottom: 2px; }
    .app svg { position: relative; }
    .app::after { position: absolute; left: 24px; bottom: 6px; height: 4px; border-radius: 2px; }
    .dot::after { content: ""; width: 8px; background: #a09c98; }
    .live::after { content: ""; left: 18px; width: 20px; background: #4cc2ff; }
    .live::before { content: ""; position: absolute; left: 3px; top: 5px; width: 50px; height: 50px; box-sizing: border-box; border: 1px solid #4d4339; border-radius: 5px; background: linear-gradient(90deg, #40362c 43px, #5a5044 43px, #352b20 45px); }
    .live svg { top: -3px; }
    .tray { margin-left: auto; display: flex; align-items: center; padding: 0 24px 1px 0; }
    .langs { margin: 0 21px 0 22px; }
    .cloud { margin-left: 23px; }
    .volume { margin: 0 10px; }
    .clock { margin-left: 20px; align-items: flex-end; }
    .two { display: flex; flex-direction: column; font-size: 15px; line-height: 20px; padding-bottom: 1px; }
  `;

  render() {
    return html`
      <div class="start">${icon("0 0 29 29", 29, 29, svg`<defs><linearGradient id="win" x1="0" y1="0" x2="1" y2="1"><stop offset="0" stop-color="#7af3fd"/><stop offset="1" stop-color="#1a98f8"/></linearGradient></defs><path d="M0 1Q0 0 1 0H14V14H0zM15 0H28Q29 0 29 1V14H15zM0 15H14V29H1Q0 29 0 28zM15 15H29V28Q29 29 28 29H15z" fill="url(#win)"/>`)}</div>
      <div class="search">${icon("0 0 19 20", 19, 20, svg`<circle cx="8" cy="8" r="6.800" fill="none" stroke="#262626" stroke-width="2"/><path d="M12.500 13 18 19" stroke="#262626" stroke-width="2.300"/>`)}${label("Search", 51)}</div>
      ${apps.map((a) => html`<div class=${classMap({ app: true, dot: a.mark === "dot", live: a.mark === "live" })}>${a.art}</div>`)}
      <div class="tray">
        ${icon("0 0 14 9", 14, 9, svg`<path d="M.8 8 7 1.800 13.200 8" fill="none" stroke="#fff" stroke-width="1.900"/>`)}
        <div class="cloud">${icon("0 0 21 18", 21, 18, svg`<circle cx="10.500" cy="6.500" r="6" fill="#a3a3a3"/><path d="M0 9.500A4.500 4.500 0 0 1 6 5.500L16 9V14H4.500A4.500 4.500 0 0 1 0 9.500z" fill="#e2e2e2"/><circle cx="14.500" cy="12" r="6" fill="#7d7b7e"/><path d="M13 9V15M16 9V15" stroke="#fff" stroke-width="1.300"/>`)}</div>
        <div class="two langs">${label("ENG", 29)}${label("INTL", 31)}</div>
        ${icon("0 0 20 15", 20, 15, svg`<g fill="none" stroke="#fff" stroke-width="1.600"><path d="M.7 6A13 13 0 0 1 19.300 6M3.600 8.800A9 9 0 0 1 16.400 8.800M6.400 11.400A5.200 5.200 0 0 1 13.600 11.400"/></g><circle cx="10" cy="13.200" r="1.700" fill="#fff"/>`)}
        <div class="volume">${icon("0 0 20 18", 20, 18, svg`<path d="M.7 6.200H4L8.600 2V16L4 11.800H.7z" fill="none" stroke="#fff" stroke-width="1.400" stroke-linejoin="round"/><path d="M11 6.500Q12.600 9 11 11.500" fill="none" stroke="#fff" stroke-width="1.400"/><path d="M13.500 4.500Q16.500 9 13.500 13.500M16.500 2Q21 9 16.500 16" fill="none" stroke="#7c797d" stroke-width="1.400"/>`)}</div>
        ${icon("0 0 20 18", 20, 18, svg`<rect x="1.200" y="5" width="16.300" height="11" rx="3" fill="none" stroke="#fff" stroke-width="1.500"/><path d="M8 7H15.500V14H3.200V11z" fill="#fff"/><path d="M18.600 8.500V12.500" stroke="#fff" stroke-width="2"/><path d="M4.500-.5 0 6.500H3L2 10.500 7 4.500H4z" fill="#fff" stroke="#2a262b" stroke-width=".7"/>`)}
        <div class="two clock">${label("21:07", 36)}${label("14/05/2025", 78)}</div>
      </div>`;
  }
}

@customElement("app-root")
class AppRoot extends LitElement {
  static styles = css`
    :host { display: flex; flex-direction: column; width: 1920px; height: 1080px; overflow: hidden; }
  `;
  render() {
    return html`<browser-chrome></browser-chrome><hoex-dashboard></hoex-dashboard><task-bar></task-bar>`;
  }
}
